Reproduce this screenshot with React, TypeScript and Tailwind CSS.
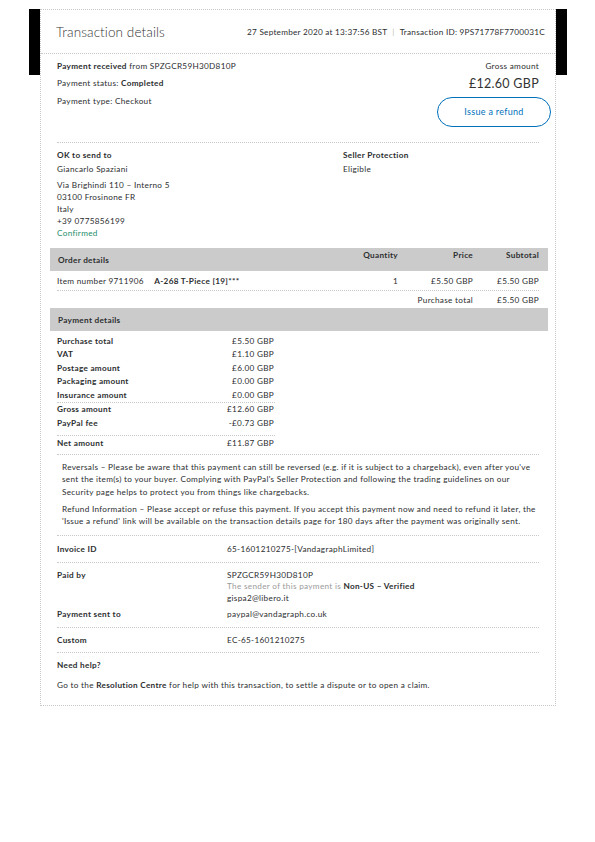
import React from 'react';

const paymentRows = [
  { label: 'Purchase total', value: '£5.50 GBP' },
  { label: 'VAT', value: '£1.10 GBP' },
  { label: 'Postage amount', value: '£6.00 GBP' },
  { label: 'Packaging amount', value: '£0.00 GBP' },
  { label: 'Insurance amount', value: '£0.00 GBP' },
];

const App: React.FC = () => {
  return (
    <div className="w-[595px] h-[842px] bg-white text-[#2c2e2f] text-[8.2px] tracking-[0.3px] leading-[12px] font-[Lato,'Liberation_Sans',sans-serif]">
      <div className="flex items-start pl-[29px] pt-[9px]">
        <div className="w-[11px] h-[66px] bg-black" />

        <div className="w-[516px] border border-dotted border-[#c8c8c8] pb-[14px]">
          {/* Header */}
          <div className="h-[44px] flex items-center justify-between pl-[15px] pr-[10px] border-b border-dotted border-[#c8c8c8]">
            <h1 className="text-[13.5px] font-light tracking-[0.1px] leading-[16px] text-[#333]">Transaction details</h1>
            <div className="flex items-center gap-[5px] tracking-[0.25px]">
              <span>27 September 2020 at 13:37:56 BST</span>
              <span className="text-[#bbb]">|</span>
              <span>Transaction ID: 9PS71778F7700031C</span>
            </div>
          </div>

          <div className="px-[16px]">
            {/* Summary */}
            <div className="h-[89px] flex justify-between border-b border-dotted border-[#c8c8c8]">
              <div className="pt-[6px]">
                <p><span className="font-bold">Payment received</span> from SPZGCR59H30D810P</p>
                <p className="mt-[5px]">Payment status: <span className="font-bold">Completed</span></p>
                <p className="mt-[6px]">Payment type: Checkout</p>
              </div>
              <div className="pt-[6px] flex flex-col items-end">
                <p>Gross amount</p>
                <p className="text-[12.5px] leading-[16px] mt-[4px] text-[#333]">£12.60 GBP</p>
                <button className="mt-[5px] -mr-[12px] w-[114px] h-[30px] rounded-full border-[1.5px] border-[#0070ba] text-[#0070ba] text-[9px]">
                  Issue a refund
                </button>
              </div>
            </div>

            {/* Shipping */}
            <div className="flex pt-[6px] pb-[9px]">
              <div className="w-[286px]">
                <p className="font-bold">OK to send to</p>
                <p className="mt-[2px]">Giancarlo Spaziani</p>
                <p className="mt-[4px]">Via Brighindi 110 – Interno 5</p>
                <p>03100 Frosinone FR</p>
                <p>Italy</p>
                <p>+39 0775856199</p>
                <p className="text-[#1b8e6c]">Confirmed</p>
              </div>
              <div>
                <p className="font-bold">Seller Protection</p>
                <p className="mt-[2px]">Eligible</p>
              </div>
            </div>

            {/* Order details */}
            <div className="-ml-[7px] -mr-[9px] h-[23px] bg-[#cbcbcb] flex pl-[8px] pr-[9px]">
              <div className="flex-1 flex items-center font-bold">Order details</div>
              <div className="w-[60px] text-right font-bold pt-[1px]">Quantity</div>
              <div className="w-[75px] text-right font-bold pt-[1px]">Price</div>
              <div className="w-[66px] text-right font-bold pt-[1px]">Subtotal</div>
            </div>
            <div className="h-[20px] flex items-center border-b border-dotted border-[#c8c8c8]">
              <div className="flex-1">
                Item number 9711906 <span className="font-bold ml-[8px]">A-268 T-Piece [19]***</span>
              </div>
              <div className="w-[60px] text-right">1</div>
              <div className="w-[75px] text-right">£5.50 GBP</div>
              <div className="w-[66px] text-right">£5.50 GBP</div>
            </div>
            <div className="h-[17px] flex items-center">
              <div className="flex-1" />
              <div className="w-[135px] text-right">Purchase total</div>
              <div className="w-[66px] text-right">£5.50 GBP</div>
            </div>

            {/* Payment details */}
            <div className="-ml-[7px] -mr-[9px] h-[23px] bg-[#cbcbcb] flex items-center pl-[8px] font-bold">
              Payment details
            </div>
            <div className="border-b border-dotted border-[#c8c8c8] pb-[4px]">
              <div className="w-[218px]">
                <div className="pt-[3px] border-b border-dotted border-[#c8c8c8]">
                  {paymentRows.map((row) => (
                    <div key={row.label} className="h-[13.5px] flex items-center justify-between pr-[1px]">
                      <span className="font-bold">{row.label}</span>
                      <span>{row.value}</span>
                    </div>
                  ))}
                </div>
                <div className="pb-[5px] border-b border-dotted border-[#c8c8c8]">
                  <div className="h-[13.5px] flex items-center justify-between pr-[1px]">
                    <span className="font-bold">Gross amount</span>
                    <span>£12.60 GBP</span>
                  </div>
                  <div className="h-[13.5px] flex items-center justify-between pr-[1px]">
                    <span className="font-bold">PayPal fee</span>
                    <span>-£0.73 GBP</span>
                  </div>
                </div>
                <div className="h-[14px] flex items-center justify-between pr-[1px]">
                  <span className="font-bold">Net amount</span>
                  <span>£11.87 GBP</span>
                </div>
              </div>
            </div>

            {/* Notices */}
            <div className="pl-[5px] pt-[6px] pb-[7px] leading-[12.5px] border-b border-dotted border-[#c8c8c8] whitespace-nowrap">
              <p>
                Reversals – Please be aware that this payment can still be reversed (e.g. if it is subject to a chargeback), even after you've
                <br />
                sent the item(s) to your buyer. Complying with PayPal's Seller Protection and following the trading guidelines on our
                <br />
                Security page helps to protect you from things like chargebacks.
              </p>
              <p className="mt-[4.5px]">
                Refund Information – Please accept or refuse this payment. If you accept this payment now and need to refund it later, the
                <br />
                'Issue a refund' link will be available on the transaction details page for 180 days after the payment was originally sent.
              </p>
            </div>

            {/* Extra info */}
            <div className="h-[27px] flex items-center border-b border-dotted border-[#c8c8c8]">
              <div className="w-[170px] font-bold">Invoice ID</div>
              <div>65-1601210275-[VandagraphLimited]</div>
            </div>
            <div className="pt-[7px] pb-[7px] leading-[11.5px] border-b border-dotted border-[#c8c8c8]">
              <div className="flex">
                <div className="w-[170px] font-bold">Paid by</div>
                <div>
                  <p>SPZGCR59H30D810P</p>
                  <p className="text-[#9a9a9a]">
                    The sender of this payment is <span className="font-bold text-[#2c2e2f]">Non-US – Verified</span>
                  </p>
                  <p>gispa2@libero.it</p>
                </div>
              </div>
              <div className="flex mt-[4.5px]">
                <div className="w-[170px] font-bold">Payment sent to</div>
                <div>paypal@vandagraph.co.uk</div>
              </div>
            </div>
            <div className="h-[25px] flex items-center border-b border-dotted border-[#c8c8c8]">
              <div className="w-[170px] font-bold">Custom</div>
              <div>EC-65-1601210275</div>
            </div>
            <div className="pt-[6px]">
              <p className="font-bold">Need help?</p>
              <p className="mt-[8px]">
                Go to the <span className="font-bold">Resolution Centre</span> for help with this transaction, to settle a dispute or to open a claim.
              </p>
            </div>
          </div>
        </div>

        <div className="w-[11px] h-[66px] bg-black" />
      </div>
    </div>
  );
};

export default App;
